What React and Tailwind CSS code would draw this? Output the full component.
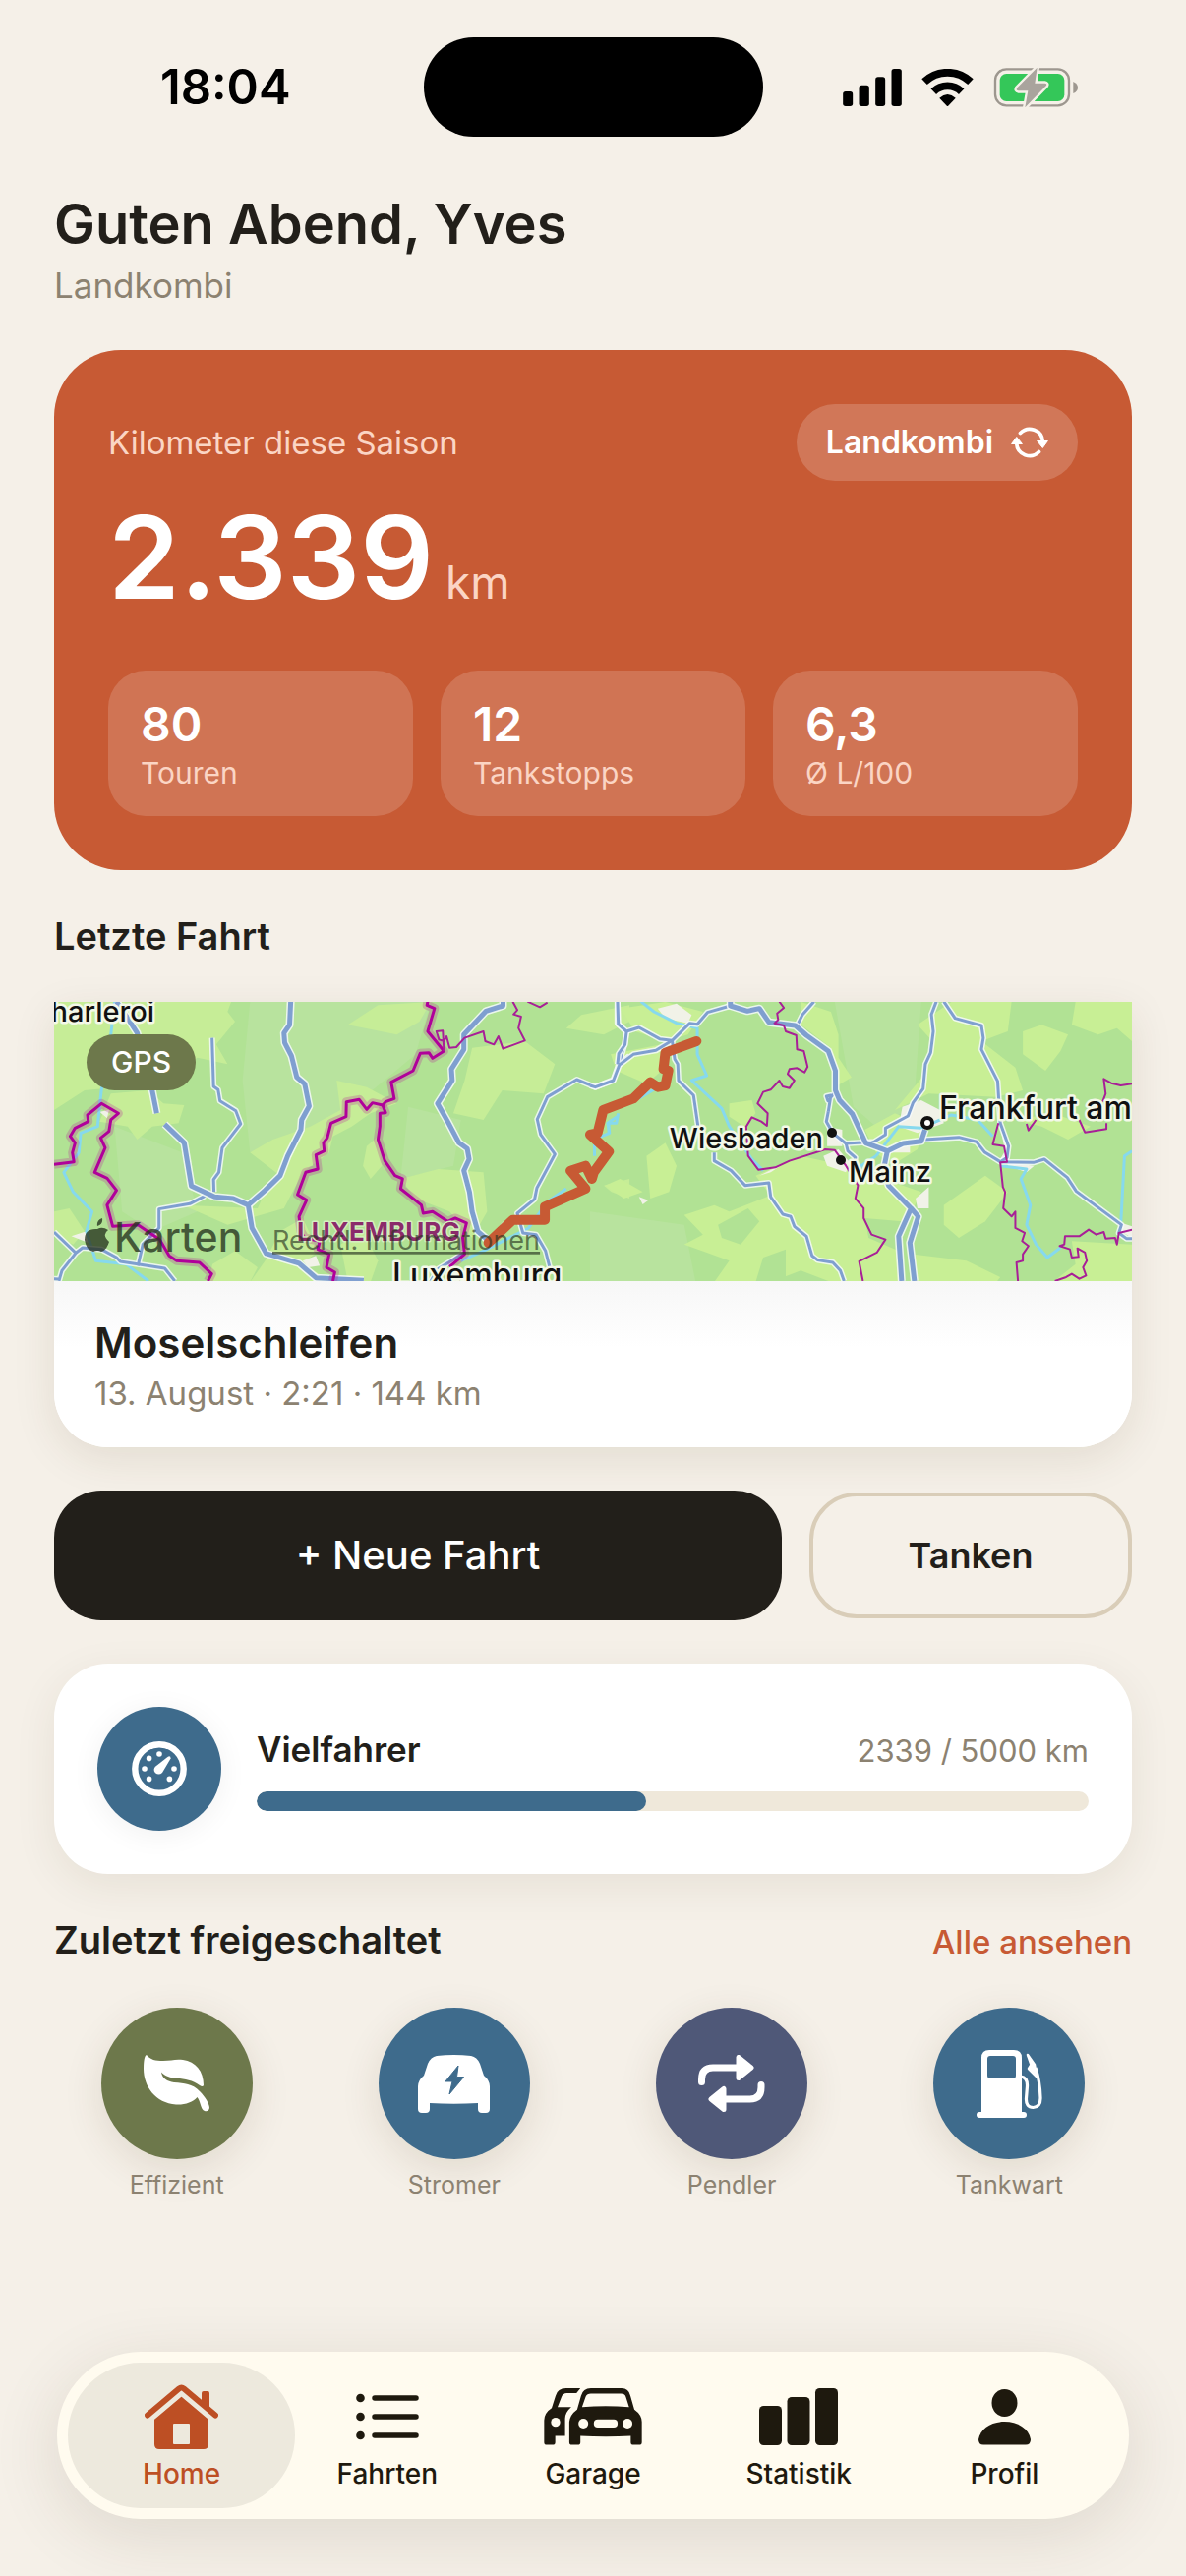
function SignalIcon() {
  return (
    <svg viewBox="48 57 179 114" className="h-[38px] w-[60px]" aria-hidden="true">
      <rect x="48" y="126" width="30" height="45" rx="8" />
      <rect x="97" y="107" width="31" height="64" rx="8" />
      <rect x="147" y="82" width="30" height="89" rx="8" />
      <rect x="196" y="57" width="31" height="114" rx="8" />
    </svg>
  );
}

function WifiIcon() {
  return (
    <svg viewBox="288 56 160 115" className="h-[38px] w-[53px]" aria-hidden="true">
      <g fill="none" stroke="#000" strokeWidth="24">
        <path d="M297 96 A103 103 0 0 1 439 96" />
        <path d="M325 126 A62 62 0 0 1 411 126" />
      </g>
      <path d="M343 146 Q368 124 393 146 L370 170 Q368 172 366 170z" />
    </svg>
  );
}

function BatteryIcon() {
  return (
    <svg viewBox="508 52 259 126" className="h-[42px] w-[87px]" aria-hidden="true">
      <rect x="513" y="59" width="225" height="111" rx="34" fill="none" stroke="#9d978f" strokeWidth="7" />
      <path d="M751 97 Q765 103 765 115 Q765 127 751 133z" fill="#9d978f" />
      <rect x="527" y="73" width="197" height="84" rx="20" fill="#34c759" />
      <path
        d="M641 54 L580 116 Q575 124 584 125 L613 125 L604 176 L668 110 Q673 103 664 102 L634 102z"
        fill="#a9a49d"
        stroke="#f5f0e8"
        strokeWidth="14"
        strokeLinejoin="round"
        paintOrder="stroke"
      />
    </svg>
  );
}

function RefreshIcon() {
  return (
    <svg viewBox="0 0 38 32" className="h-[32px] w-[38px]" aria-hidden="true">
      <g fill="none" stroke="#fff" strokeWidth="3.8" strokeLinecap="round">
        <path d="M9.5 6.5 A13.3 13.3 0 0 1 32.3 15" />
        <path d="M28.5 25.5 A13.3 13.3 0 0 1 5.7 17" />
      </g>
      <path d="M26.6 14.5 H37.4 L32.3 21.5z M.6 17.5 H11.4 L5.8 10.5z" fill="#fff" stroke="#fff" strokeLinejoin="round" />
    </svg>
  );
}

function GaugeIcon() {
  return (
    <svg viewBox="0 0 56 56" className="size-14" fill="#fff" aria-hidden="true">
      <circle cx="28" cy="28" r="24.7" fill="none" stroke="#fff" strokeWidth="6.4" />
      <circle cx="28" cy="13" r="2.8" />
      <circle cx="17.6" cy="17.4" r="2.8" />
      <circle cx="13" cy="28" r="2.8" />
      <circle cx="17.6" cy="38.4" r="2.8" />
      <circle cx="38.4" cy="38.4" r="2.8" />
      <circle cx="43" cy="28" r="2.8" />
      <path d="M36.8 15.8 Q39.5 14.4 39.6 17.6 L31 32 Q27.5 35 24 32.2 Q21 28.6 24.4 25.4z" />
    </svg>
  );
}

function LeafIcon() {
  return (
    <svg viewBox="0 0 67 58" className="h-[58px] w-[67px]" fill="#fff" aria-hidden="true">
      <path d="M3 0 C7 5 12 6 20 6 C28 6 32 4 40 5 C53 7 61 16 61 31 Q60 33 57 31 C50 26 42 24 34 24 C27 23 22 22 18 17.5 C19 24 24 27 31 28 C42 29 49 29 57 37 C63 43 67 50 67 54 Q66 58 62 57 C58 56 58 47 54.5 43 C50 48 42 51 33 50.5 C12 49 0 32 0 14 C0 5 1 1 3 0z" />
    </svg>
  );
}

function ElectricCarIcon() {
  return (
    <svg viewBox="0 0 73 59" className="h-[59px] w-[73px]" aria-hidden="true">
      <path
        fill="#fff"
        d="M19 1 Q36.5 -1 54 1 Q60 2 63 9 L67 21 Q73 26 73 32 V55 Q73 59 69 59 H65 Q61 59 61 55 V49 Q36.5 50.5 12 49 V55 Q12 59 8 59 H4 Q0 59 0 55 V32 Q0 26 6 21 L10 9 Q13 2 19 1z"
      />
      <path d="M41 11 L28 27 H35 L32 40 L46.5 22.5 H39.5z" fill="#3e6b8c" stroke="#3e6b8c" strokeLinejoin="round" />
    </svg>
  );
}

function RepeatIcon() {
  return (
    <svg viewBox="0 0 68 58" className="h-[58px] w-[68px]" aria-hidden="true">
      <g fill="none" stroke="#fff" strokeWidth="7" strokeLinecap="round">
        <path d="M3.5 27.5 V25 Q3.5 13 15 13 H41" />
        <path d="M64 30.5 V33 Q64 45 52.5 45 H27" />
      </g>
      <path
        d="M41 2.5 V23.5 L54 13z M26 34.5 V55.5 L13 45z"
        fill="#fff"
        stroke="#fff"
        strokeWidth="5"
        strokeLinejoin="round"
      />
    </svg>
  );
}

function PumpIcon() {
  return (
    <svg viewBox="0 0 68 69" className="h-[69px] w-[68px]" aria-hidden="true">
      <path
        fill="#fff"
        fillRule="evenodd"
        d="M6 8 Q6 0 14 0 H39 Q47 0 47 8 V63 H49 Q52 63 52 66 Q52 69 49 69 H4 Q1 69 1 66 Q1 63 4 63 H6z M15 6 Q12 6 12 9 V26 Q12 29 15 29 H38 Q41 29 41 26 V9 Q41 6 38 6z"
      />
      <path
        d="M46 27 Q53 28 52.5 37 L51.5 49 Q51 58.5 58.5 58.5 Q66.5 58 66 48 Q65.5 32 61 18"
        fill="none"
        stroke="#fff"
        strokeWidth="3.2"
      />
      <path d="M53 5 L60 15 L62 27 L54 19 L56.5 15z" fill="#fff" stroke="#fff" strokeWidth="2.5" strokeLinejoin="round" />
    </svg>
  );
}

function HomeIcon() {
  return (
    <svg viewBox="0 0 75 66" className="h-[66px] w-[75px]" aria-hidden="true">
      <path
        fill="currentColor"
        fillRule="evenodd"
        d="M37.5 12 L65 35 V61 Q65 66 60 66 H15 Q10 66 10 61 V35z M30 40 Q29 40 29 41 V60 Q29 61 30 61 H45 Q46 61 46 60 V41 Q46 40 45 40z"
      />
      <path d="M3 34.5 L35 7.5 Q37.5 5.5 40 7.5 L72 34.5" fill="none" stroke="#ede9dd" strokeWidth="11" />
      <path
        d="M3 31.5 L35 4.5 Q37.5 2.5 40 4.5 L72 31.5"
        fill="none"
        stroke="currentColor"
        strokeWidth="6"
        strokeLinecap="round"
      />
      <path d="M58 20 V9 Q58 7 60 7 H64 Q66 7 66 9 V27z" fill="currentColor" />
    </svg>
  );
}

function ListIcon() {
  return (
    <svg viewBox="0 0 64 48" className="h-12 w-16" aria-hidden="true">
      <g fill="currentColor">
        <circle cx="4.5" cy="5" r="4.3" />
        <circle cx="4.5" cy="24" r="4.3" />
        <circle cx="4.5" cy="43" r="4.3" />
      </g>
      <path d="M19 5 H61 M19 24 H61 M19 43 H61" stroke="currentColor" strokeWidth="5.5" strokeLinecap="round" />
    </svg>
  );
}

function CarsIcon() {
  return (
    <svg viewBox="38 57 301 174" className="h-[58px] w-[100px]" aria-hidden="true">
      <path
        fill="currentColor"
        d="M150 57 L138 72 H108 Q96 73 92 84 L80 115 H122 Q104 130 103 150 V203 H73 V222 Q73 230 65 230 H47 Q39 230 39 222 V155 Q40 132 62 118 L74 80 Q80 57 106 57z"
      />
      <path
        fill="currentColor"
        d="M140 122 L152 80 Q158 57 182 57 H276 Q298 57 303 80 L315 122 Q338 138 338 160 V222 Q338 230 330 230 H312 Q304 230 304 222 V203 Q228 207 150 203 V222 Q150 230 142 230 H124 Q116 230 116 222 V160 Q118 138 140 122z"
      />
      <g fill="#fffbef">
        <path d="M155 115 L166 83 Q170 73 182 73 H274 Q286 73 289 83 L299 115 Q228 108 155 115z" />
        <circle cx="74" cy="161" r="14" />
        <circle cx="159" cy="165" r="15" />
        <circle cx="294" cy="165" r="15" />
        <rect x="191" y="152" width="73" height="25" rx="12" />
      </g>
    </svg>
  );
}

function BarsIcon() {
  return (
    <svg viewBox="0 0 80 58" className="h-[58px] w-20" fill="currentColor" aria-hidden="true">
      <rect x="0" y="18" width="23" height="40" rx="4.5" />
      <rect x="28.5" y="9" width="23" height="49" rx="4.5" />
      <rect x="57" y="0" width="23" height="58" rx="4.5" />
    </svg>
  );
}

function PersonIcon() {
  return (
    <svg viewBox="0 0 53 57" className="h-[57px] w-[53px]" fill="currentColor" aria-hidden="true">
      <ellipse cx="26.5" cy="14" rx="13" ry="14" />
      <path d="M0 51 C2 40 13 33 26.5 33 S51 40 53 51 Q53 56.5 48 56.5 H5 Q0 56.5 0 51z" />
    </svg>
  );
}

const westForest = [
  'M39 59 H510 L500 90 L520 120 L470 190 L500 250 L420 230 L330 290 L210 320 L120 330 L39 390z',
  'M190 340 L290 330 L330 370 L385 375 L370 430 L300 440 L260 480 L235 440 L160 425z',
  'M790 300 L870 320 L950 370 L880 400 L830 440 L780 470 L770 520 L700 580 L650 690 L500 740 L420 700 L380 680 L580 690 L600 640 L640 590 L560 520 L620 480 L720 440 L800 390z',
  'M820 130 L900 70 L1040 60 L1010 120 L950 160z',
  'M1150 200 L1290 180 L1370 250 L1340 340 L1230 330 L1180 420 L1100 400 L1130 300z',
  'M960 600 L1060 570 L1180 580 L1190 700 L1150 780 L1090 700 L1000 660z',
  'M870 500 L900 470 L910 560 L880 600 L860 560z',
  'M640 760 L700 720 L740 820 L700 860 L780 915 H560 L600 850z',
  'M460 860 L520 820 L580 870 L560 915 H450z',
  'M39 700 L80 690 L120 760 L90 800 L39 770z',
  'M800 800 L860 760 L900 850 L880 915 H820z',
  'M1400 140 L1440 100 L1568 70 L1568 120 L1500 160z',
  'M1500 620 L1568 600 L1568 660 L1520 640z',
];

const eastForest = [
  'M80 80 L200 60 L300 90 L260 160 L200 180 L120 150z',
  'M55 220 L190 190 L200 260 L150 310 L70 270z',
  'M560 60 L640 90 L660 160 L660 230 L695 290 L650 320 L640 200 L560 130z',
  'M870 130 L960 60 L1120 60 L1110 150 L1040 180 L1130 260 L1150 330 L1080 350 L900 340 L810 390 L890 280 L910 180z',
  'M1150 150 L1200 130 L1270 160 L1250 210 L1210 270 L1150 220z',
  'M1290 60 H1440 V180 L1400 140 L1350 160 L1280 130z',
  'M370 370 L430 360 L440 400 L410 440 L370 410z',
  'M150 530 L200 490 L230 560 L210 640 L160 660z',
  'M40 620 L80 600 L140 640 L90 660z',
  'M440 590 L560 530 L680 560 L880 640 L850 710 L820 780 L830 915 H640 L560 880 L480 915 H330 L370 850 L250 800 L300 770 L250 710 L330 680 L370 700 L480 650z',
  'M730 450 L810 400 L890 440 L870 510 L800 560 L760 520z',
  'M940 680 L1050 590 L1110 640 L1050 730 L980 780 L940 740z',
  'M860 830 L1000 850 L1090 900 L1080 915 H860z',
  'M1280 790 L1440 800 V915 H1230 L1290 860z',
  'M1130 420 L1230 400 L1330 440 L1270 480 L1200 440z',
];

const eastMeadow = ['M340 740 L420 690 L450 730 L400 800 L350 780z', 'M460 840 L520 815 L520 915 H440z', 'M730 720 L830 730 L820 820 L740 780z'];

const towns = [
  'M180 80 L230 65 L270 100 L260 125 L200 110z',
  'M830 380 L880 360 L930 390 L940 430 L870 460 L820 440z',
  'M630 440 L670 450 L670 500 L630 500z',
  'M620 530 L660 510 L690 550 L680 580 L630 560z',
  'M865 660 L900 625 V690 L870 690z',
  'M810 500 H850 V520 H800z',
  'M1090 440 L1110 500 L1090 540 L1110 550 L1180 560 L1160 580 L1110 560z',
  'M450 590 L520 550 L480 580z',
  'M130 655 L155 665 L140 678z',
  'M1400 730 L1440 745 V780 L1410 760z',
];

const westRivers = [
  'M200 59 L190 160 L165 330 L160 380 L155 440 L110 460 L105 520 L65 580 L90 640 L140 700 L125 760 L150 850 L230 860 L290 912',
  'M1535 410 L1510 430 L1515 460 L1475 480 L1475 530',
  'M1400 630 L1350 670 L1300 750 L1180 820 L1120 850',
];

const eastRivers = [
  'M135 59 L170 90 L230 125 L285 140 L285 220 L310 285 L270 300 L350 385 L370 440 L430 540 L460 575',
  'M1440 515 L1420 530 L1410 740 M1090 560 L1160 570 L1145 600 L1170 680 L1160 740 L1185 800 L1215 840 L1250 810',
  'M760 530 L820 440 L880 445 L960 405 L1030 420 L1070 470 M700 610 L720 560 L760 530',
  'M75 400 L70 430 L50 430 L50 460 M180 320 L130 355',
];

const westRoads = [
  'M205 59 L235 110 L260 155 L300 330 L312 400 M333 433 L385 490 L404 622 L466 655 L515 660 L555 680 L565 750 L603 828 L690 858 L735 902 L862 910',
  'M668 59 L665 130 L650 155 L652 185 L670 225 L684 290 L705 310 L717 378 L697 420 L695 450 L660 530 L640 590 L600 635 L555 680',
  'M1232 59 V72 L1187 88 L1128 160 V205 L1095 265 L1097 300 L1058 370 L1085 425 L1115 490 L1137 508 L1142 540 L1128 575 L1143 640 L1150 700 L1165 760 L1195 790',
];

const westMinorRoads = [
  'M459 170 L463 318 L475 328 L480 362 L522 392 L535 432 L486 505 L477 580 L463 602 L464 640',
  'M440 652 L400 676 L318 692 V750 L275 800 L262 865',
  'M39 762 L97 826 L60 880 L52 912 M39 905 L52 906 M97 826 L115 810 L165 815 L205 840 L215 852 L333 873 L360 912',
  'M1536 59 V125 L1560 152 L1555 190 L1540 250 L1525 298 L1477 320 L1428 297 L1350 350 L1323 418 L1332 465 L1370 525 L1322 628 L1316 662 L1270 705 L1285 765 L1320 770 L1345 820 L1356 870',
  'M1540 250 L1568 225',
  'M1130 825 L1060 875 L1040 912 M1195 790 L1240 735',
];

const eastRoads = [
  'M373 59 V72 L418 88 L450 80 L475 122 L545 132 L575 162 L633 210 L652 270 V330 L663 360 L697 402 L732 490 L790 515 L832 492 L880 485 L890 450',
  'M790 515 L780 570 L793 620 L853 690 L820 775 L828 912 M853 690 L872 715 L850 795 L862 912',
];

const eastMinorRoads = [
  'M373 72 L312 92 L285 128 L265 125 L218 178 L185 173 L130 138 L97 150 L75 128 L73 59',
  'M218 178 L175 208 L115 220 L78 252 L62 300 L14 320 L0 315 M97 150 L93 190 L76 218 L73 250',
  'M218 178 L225 235 L233 250 L235 300 L275 345 L287 440 M330 520 V545 L375 575 L412 620 L475 612 L480 655 L512 708 L533 715 L543 745 L575 775 L590 835 L605 848 L645 855 L665 880 L675 912',
  'M595 59 L565 98 L550 132',
  'M633 395 L628 425 L645 460 L680 492 L755 487 L785 465 V445 L845 408 L858 368 L885 325 L891 250 L905 215 L912 150 L907 98 L920 59 M940 59 L970 110 L1040 132 L1045 170 L1040 205 L1083 302 L1090 430 L1112 500 L1108 535 L1090 548',
  'M633 395 L640 345 L628 348 L632 362 L648 340',
  'M890 480 L980 473 L1027 487 L1048 518 L1090 548 L1178 550 L1207 540 L1268 596 L1292 638 L1412 740 L1405 765 L1425 782 H1440',
  'M680 492 L685 515 L705 535 L700 560',
];

const westBorders = [
  'M1032 59 L1030 70 L1050 80 L1032 150 L1075 210 L1045 232 L1035 215 L1012 217 L993 270 L935 305 L943 355 L920 365 L912 375 L885 368 L870 388 L850 358 L816 365 L815 410 L775 430 L765 475 L755 490 L757 515 L735 527 L740 570 L708 580 L686 648 L710 665 L690 715 L695 760 L705 780 L745 790 L740 815 L770 830 L763 870 L785 885 L780 912',
  'M912 375 L920 398 L905 400 L905 440 L900 480 L918 545 L945 590 L965 600 L960 630 L1015 680 L1020 705 L1045 700 L1085 730 L1105 720 L1135 735 L1125 780 L1130 830 L1090 868',
  'M39 556 L92 548 L88 520 L95 490 L82 470 L95 445 L130 425 L128 405 L165 370 L210 400 L190 420 L185 455 L163 475 L175 505 L147 580 L180 598 L205 635 L180 680 L195 745 L262 740 L320 785 L345 835 L365 850 L425 855 L458 890 L448 912',
];

const westThinBorders = [
  'M1258 59 L1270 85 L1260 98 L1280 105 L1273 140 L1290 178 L1232 203 L1220 165 L1208 190 L1185 180 L1180 150 L1130 170 L1108 198 L1090 200 L1082 165 L1075 180 L1062 175 L1055 150 L1072 148 L1075 210',
  'M1297 59 L1330 76 L1350 62',
];

const eastBorders = [
  'M503 59 L515 78 L497 95 L500 115 L490 125 L515 132 L520 150 L548 162 L550 205 L568 210 L578 258 L570 275 L550 262 L530 265 L525 280 L543 300 L530 323 L512 318 L503 300 L480 328 L460 335 L445 370 L472 400 L470 438 L455 425 L430 412 L415 440 L420 530 L447 572 L492 565 L530 545 L625 510 L650 512 L680 560 L712 620 L705 660 L727 690 V720 L748 770 L785 785 L762 825 L715 852 L725 912',
  'M1440 310 L1410 315 L1385 308 L1365 295 L1370 340 L1362 365 M1372 430 V448 L1315 458 L1300 420 M1185 420 L1165 452 L1160 432 M1085 430 L1070 495 L1100 500 L1108 548 L1090 550 L1097 625 L1103 640 L1098 690 L1120 715 L1130 700 L1130 750 L1155 765 L1148 790 L1165 805 L1150 830 V850 L1133 855 L1137 912',
  'M1440 755 L1405 765 L1400 800 L1395 780 L1370 782 L1365 762 L1345 770 L1325 755 L1300 775 L1262 775 L1260 800 L1248 805 L1275 815 L1280 840 L1298 838 L1295 812 L1315 825 L1320 850 L1310 870 L1318 895 L1300 905 L1280 890 L1265 900 L1235 912',
];

function Lines({ paths, color, width, opacity }) {
  return (
    <g fill="none" stroke={color} strokeWidth={width} strokeOpacity={opacity} strokeLinejoin="round">
      {paths.map((d) => (
        <path key={d} d={d} vectorEffect="non-scaling-stroke" />
      ))}
    </g>
  );
}

function Areas({ paths, color }) {
  return (
    <g fill={color}>
      {paths.map((d) => (
        <path key={d} d={d} />
      ))}
    </g>
  );
}

const west = 'matrix(0.3827 0 0 0.3333 -15 -20)';
const east = 'matrix(0.3827 0 0 0.3333 545 -20)';

function RouteMap() {
  return (
    <svg
      viewBox="0 0 1096 284"
      preserveAspectRatio="xMidYMid slice"
      className="h-[284px] w-full bg-[#b1e294]"
      role="img"
      aria-label="Karte mit der Route der letzten Fahrt"
    >
      <g transform={west}>
        <Areas paths={['M560 59 H1040 L1000 220 L780 430 L560 520 L540 300z M200 440 L380 520 L420 700 L300 760 L220 700z M980 380 L1120 420 L1100 560 L960 600z']} color="#b8e39e" />
        <Areas paths={westForest} color="#c6ed97" />
        <Areas paths={['M700 850 L735 835 L745 865 L715 870z M160 395 L185 390 L180 415z M85 775 L125 760 L130 795z']} color="#f1f2e8" />
        <Lines paths={westRivers} color="#86d9ee" width="3" />
      </g>
      <g transform={east}>
        <Areas paths={['M650 59 H880 L860 380 L760 440 L700 380z M0 700 L250 740 L280 912 H0z']} color="#b8e39e" />
        <Areas paths={eastForest} color="#c8ef95" />
        <Areas paths={eastMeadow} color="#b1e294" />
        <Areas paths={towns} color="#f1f2e8" />
        <Lines paths={eastRivers} color="#86d9ee" width="3" />
      </g>
      <g transform={west}>
        <Lines paths={westMinorRoads} color="#f4f9fb" width="6" opacity="0.85" />
        <Lines paths={westMinorRoads} color="#7f9fd0" width="3" />
        <Lines paths={westRoads} color="#f4f9fb" width="8" opacity="0.85" />
        <Lines paths={westRoads} color="#7f9fd0" width="5" />
      </g>
      <g transform={east}>
        <Lines paths={eastMinorRoads} color="#f4f9fb" width="6" opacity="0.85" />
        <Lines paths={eastMinorRoads} color="#7f9fd0" width="3" />
        <Lines paths={eastRoads} color="#f4f9fb" width="8" opacity="0.85" />
        <Lines paths={eastRoads} color="#7f9fd0" width="5" />
      </g>
      <g transform={west}>
        <Lines paths={westBorders} color="#b4009c" width="9" opacity="0.22" />
        <Lines paths={westBorders} color="#b0009a" width="3" />
        <Lines paths={westThinBorders} color="#a81f97" width="2" />
      </g>
      <g transform={east}>
        <Lines paths={eastBorders} color="#a81f97" width="2" />
      </g>
      <g transform={east} fill="none" stroke="#c75a34" strokeLinejoin="round" strokeLinecap="round">
        <path
          vectorEffect="non-scaling-stroke"
          strokeWidth="10"
          d="M283 180 L200 215 L195 265 L208 270 L200 315 L180 320 L160 305 L115 355 L35 390 L20 460 L0 465 L50 517 L10 580 L5 600 L-12 560 L-52 575 L-12 630 L-120 685 V725 H-205 L-270 795"
        />
      </g>
      <g
        fontFamily="Inter, sans-serif"
        fontSize="29"
        fontWeight="500"
        fill="#111"
        stroke="#f3f8e8"
        strokeWidth="5"
        strokeLinejoin="round"
        paintOrder="stroke"
      >
        <text x="102" y="20" textAnchor="end">Charleroi</text>
        <text x="782" y="149" textAnchor="end">Wiesbaden</text>
        <text x="808" y="183">Mainz</text>
        <text x="900" y="119" fontSize="32">Frankfurt am</text>
        <text x="344" y="289" fontSize="32">Luxemburg</text>
        <text x="247" y="243" fontSize="26" fontWeight="700" fill="#8b2b6b" stroke="#d6efc0" strokeWidth="3">
          LUXEMBURG
        </text>
      </g>
      <circle cx="791" cy="133" r="5" fill="#111" />
      <circle cx="800" cy="161" r="5" fill="#111" />
      <circle cx="888" cy="123" r="5" fill="#fff" stroke="#111" strokeWidth="4" />
      <g fill="#26331f" fillOpacity="0.78" fontFamily="Inter, sans-serif">
        <path d="M44 228 q-1 -6 5 -8 q1 6 -5 8z M44 231 q5 -3 11 1 q-7 5 1 12 q-3 9 -8 10 q-4 -2 -8 0 q-7 -1 -9 -12 q0 -12 13 -11z" />
        <text x="61" y="254" fontSize="41" fontWeight="500">Karten</text>
      </g>
      <text
        x="222"
        y="252"
        fontFamily="Inter, sans-serif"
        fontSize="27"
        fill="#26331f"
        fillOpacity="0.65"
        textDecoration="underline"
      >
        Rechtl. Informationen
      </text>
    </svg>
  );
}

const stats = [
  { value: '80', label: 'Touren' },
  { value: '12', label: 'Tankstopps' },
  { value: '6,3', label: 'Ø L/100' },
];

const badges = [
  { label: 'Effizient', Icon: LeafIcon, color: 'bg-[#6d784b]' },
  { label: 'Stromer', Icon: ElectricCarIcon, color: 'bg-[#3e6b8c]' },
  { label: 'Pendler', Icon: RepeatIcon, color: 'bg-[#4f5878]' },
  { label: 'Tankwart', Icon: PumpIcon, color: 'bg-[#3e6b8c]' },
];

const tabs = [
  { label: 'Home', Icon: HomeIcon, active: true },
  { label: 'Fahrten', Icon: ListIcon },
  { label: 'Garage', Icon: CarsIcon },
  { label: 'Statistik', Icon: BarsIcon },
  { label: 'Profil', Icon: PersonIcon },
];

export default function App() {
  const progress = { value: 2339, goal: 5000 };

  return (
    <div className="flex min-h-screen flex-col bg-[#f5f0e8] font-['Inter',sans-serif] text-[#221f1a]">
      <header className="grid grid-cols-[1fr_345px_1fr] items-center pt-[38px] text-black">
        <div className="pl-7 text-center text-[49px] font-semibold leading-none">18:04</div>
        <div className="h-[101px] rounded-full bg-black" />
        <div className="flex items-center justify-center gap-5 pr-7">
          <SignalIcon />
          <WifiIcon />
          <BatteryIcon />
        </div>
      </header>

      <main className="flex flex-col px-[55px] pt-[55px]">
        <h1 className="text-[56px] font-semibold leading-[68px]">Guten Abend, Yves</h1>
        <p className="mt-[6px] text-[35px] leading-[44px] text-[#8c8271]">Landkombi</p>

        <section className="mt-11 rounded-[68px] bg-[#c75a34] p-[55px] text-white">
          <div className="flex items-center justify-between">
            <span className="text-[33px] leading-10 text-[#fbd5c4]">Kilometer diese Saison</span>
            <button className="flex h-[78px] items-center gap-[18px] rounded-full bg-white/18 px-[30px] text-[32px] font-semibold">
              Landkombi
              <RefreshIcon />
            </button>
          </div>
          <div className="mt-[18px] flex items-baseline gap-3">
            <span className="text-[117px] font-semibold leading-[120px]">2.339</span>
            <span className="text-[46px] leading-[56px] text-[#fbd5c4]">km</span>
          </div>
          <dl className="mt-[55px] grid grid-cols-3 gap-7">
            {stats.map(({ value, label }) => (
              <div key={label} className="flex flex-col-reverse rounded-[38px] bg-white/16 px-[33px] py-[25px]">
                <dt className="text-[30px] leading-[38px] text-[#fbd5c4]">{label}</dt>
                <dd className="text-[48px] font-semibold leading-[60px]">{value}</dd>
              </div>
            ))}
          </dl>
        </section>

        <h2 className="mt-11 text-[38px] font-semibold leading-[46px]">Letzte Fahrt</h2>
        <section className="mt-11 overflow-hidden rounded-b-[55px] bg-white shadow-[0_12px_44px_rgba(70,50,10,0.10)]">
          <div className="relative flex">
            <RouteMap />
            <span className="absolute left-[33px] top-[33px] flex h-[57px] items-center rounded-full bg-[#6d784b] px-[25px] text-[30px] font-medium text-white">
              GPS
            </span>
          </div>
          <div className="bg-linear-to-b from-[#f7f7f7] to-white to-40% px-[41px] pb-[35px] pt-[38px]">
            <h3 className="text-[42px] font-semibold leading-[50px]">Moselschleifen</h3>
            <p className="mt-[6px] text-[33px] leading-10 text-[#8c8271]">13. August · 2:21 · 144 km</p>
          </div>
        </section>

        <div className="mt-11 grid grid-cols-[1fr_328px] items-center gap-7">
          <button className="h-[132px] rounded-[48px] bg-[#221f1a] text-[40px] font-medium text-white">+ Neue Fahrt</button>
          <button className="h-32 rounded-[48px] border-4 border-[#d9cdb8] text-[36px] font-semibold">Tanken</button>
        </div>

        <section className="mt-11 flex items-center gap-9 rounded-[55px] bg-white p-11 shadow-[0_12px_44px_rgba(70,50,10,0.08)]">
          <div className="flex size-[126px] shrink-0 items-center justify-center rounded-full bg-[#3e6b8c] shadow-[0_4px_30px_rgba(0,0,0,0.06)]">
            <GaugeIcon />
          </div>
          <div className="flex-1">
            <div className="flex items-baseline justify-between leading-[44px]">
              <h3 className="text-[35px] font-semibold">Vielfahrer</h3>
              <span className="text-[31px] text-[#8c8271]">
                {progress.value} / {progress.goal} km
              </span>
            </div>
            <div
              className="mt-[19px] h-5 overflow-hidden rounded-full bg-[#efe8da]"
              role="progressbar"
              aria-label="Vielfahrer"
              aria-valuenow={progress.value}
              aria-valuemax={progress.goal}
            >
              <div
                className="h-full rounded-full bg-[#3e6b8c]"
                style={{ width: `${(progress.value / progress.goal) * 100}%` }}
              />
            </div>
          </div>
        </section>

        <div className="mt-11 flex items-baseline justify-between leading-[46px]">
          <h2 className="text-[38px] font-semibold">Zuletzt freigeschaltet</h2>
          <a href="#abzeichen" className="text-[33px] font-medium text-[#c75a34]">
            Alle ansehen
          </a>
        </div>
        <ul className="mt-11 grid grid-cols-4 gap-[33px]">
          {badges.map(({ label, Icon, color }) => (
            <li key={label} className="flex flex-col items-center gap-[10px]">
              <div
                className={`${color} flex size-[154px] items-center justify-center rounded-full shadow-[0_10px_40px_rgba(70,50,10,0.12)]`}
              >
                <Icon />
              </div>
              <span className="text-[25px] leading-8 text-[#8c8271]">{label}</span>
            </li>
          ))}
        </ul>
      </main>

      <nav className="mx-[58px] mb-[58px] mt-auto grid grid-cols-5 rounded-full bg-[#fffbef] px-[22px] py-[11px] shadow-[0_16px_70px_rgba(60,45,20,0.12)]">
        {tabs.map(({ label, Icon, active }) => (
          <a
            key={label}
            href={`#${label.toLowerCase()}`}
            aria-current={active ? 'page' : undefined}
            className={`-mx-[11px] flex flex-col items-center gap-1 rounded-full py-[18px] ${active ? 'bg-[#ede9dd] text-[#bd4f24]' : 'text-[#1e190e]'}`}
          >
            <span className="flex h-[74px] items-center">
              <Icon />
            </span>
            <span className="text-[28px] font-medium leading-[34px]">{label}</span>
          </a>
        ))}
      </nav>
    </div>
  );
}
